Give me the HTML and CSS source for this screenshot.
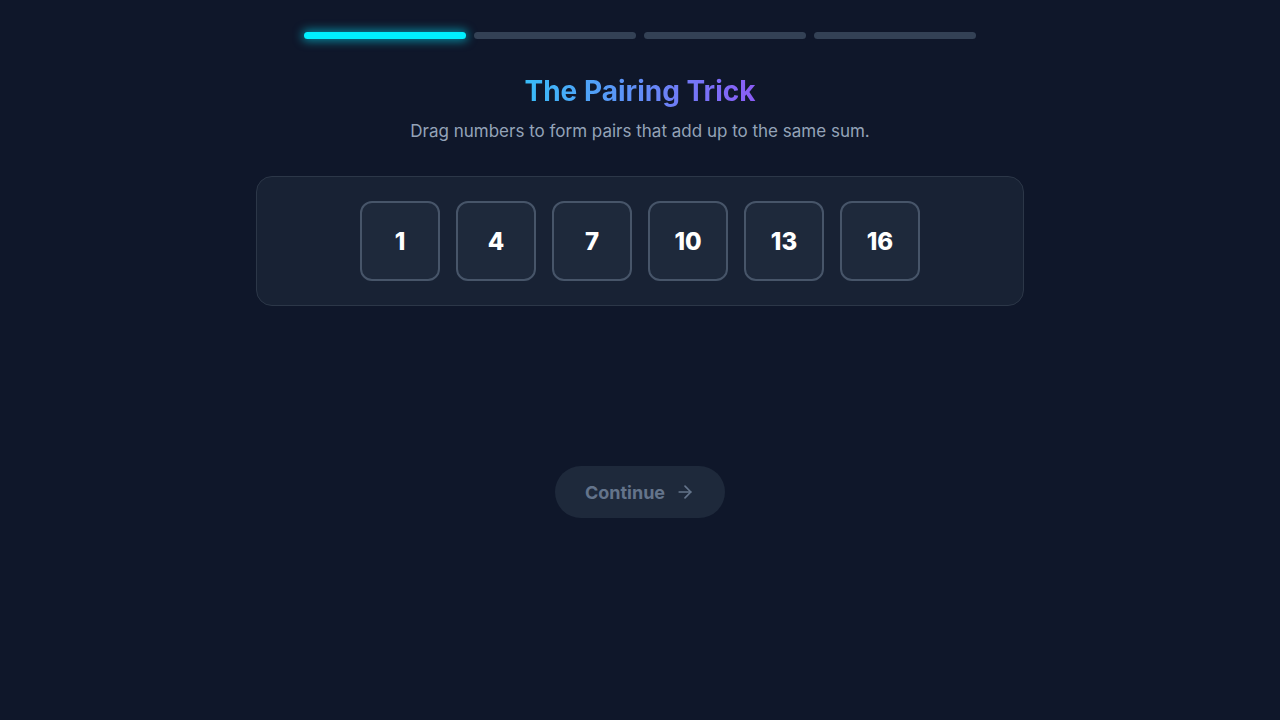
FILE: index.html
```html
<!DOCTYPE html>
<html>
<head>
<meta charset="utf-8">
<link rel="stylesheet" href="styles.css">
</head>
<body>
<main class="page">
  <div class="progress">
    <span class="seg active"></span>
    <span class="seg"></span>
    <span class="seg"></span>
    <span class="seg"></span>
  </div>
  <h1 class="title">The Pairing Trick</h1>
  <p class="subtitle">Drag numbers to form pairs that add up to the same sum.</p>
  <section class="pool">
    <div class="tile">1</div>
    <div class="tile">4</div>
    <div class="tile">7</div>
    <div class="tile">10</div>
    <div class="tile">13</div>
    <div class="tile">16</div>
  </section>
  <div class="spacer"></div>
  <button class="continue" disabled>Continue
    <svg width="20" height="20" viewBox="0 0 24 24" fill="none" stroke="currentColor" stroke-width="2" stroke-linecap="round" stroke-linejoin="round"><path d="M5 12h14"/><path d="M12 5l7 7-7 7"/></svg>
  </button>
</main>
</body>
</html>
```
FILE: styles.css
```css
html, body {
  margin: 0;
  padding: 0;
  background: #0f172a;
  font-family: Inter, "Noto Sans", sans-serif;
}
.page {
  width: 768px;
  margin: 0 auto;
  padding-top: 32px;
  display: flex;
  flex-direction: column;
  align-items: center;
}
.progress {
  display: flex;
  gap: 8px;
  width: 672px;
}
.seg {
  flex: 1;
  height: 7px;
  border-radius: 4px;
  background: #334155;
}
.seg.active {
  background: #00f0ff;
  box-shadow: 0 0 10px 2px rgba(0, 229, 255, 0.55);
}
.title {
  margin: 34px 0 0;
  font-size: 28px;
  line-height: 36px;
  font-weight: 700;
  background: linear-gradient(90deg, #38bdf8 0%, #8b5cf6 100%);
  -webkit-background-clip: text;
  background-clip: text;
  color: transparent;
}
.subtitle {
  margin: 10px 0 0;
  font-size: 17px;
  line-height: 24px;
  color: #94a3b8;
}
.pool {
  box-sizing: border-box;
  margin-top: 33px;
  width: 768px;
  padding: 24px;
  display: flex;
  justify-content: center;
  gap: 16px;
  background: #182234;
  border: 1px solid #2c3748;
  border-radius: 16px;
}
.tile {
  box-sizing: border-box;
  width: 80px;
  height: 80px;
  display: flex;
  align-items: center;
  justify-content: center;
  background: #1e293b;
  border: 2px solid #475569;
  border-radius: 12px;
  color: #ffffff;
  font-size: 24px;
  font-weight: 800;
}
.spacer {
  height: 160px;
}
.continue {
  display: flex;
  align-items: center;
  gap: 10px;
  height: 52px;
  padding: 0 30px;
  border: none;
  border-radius: 26px;
  background: #1e293b;
  color: #64748b;
  font-family: Inter, "Noto Sans", sans-serif;
  font-size: 18px;
  font-weight: 700;
}
```
